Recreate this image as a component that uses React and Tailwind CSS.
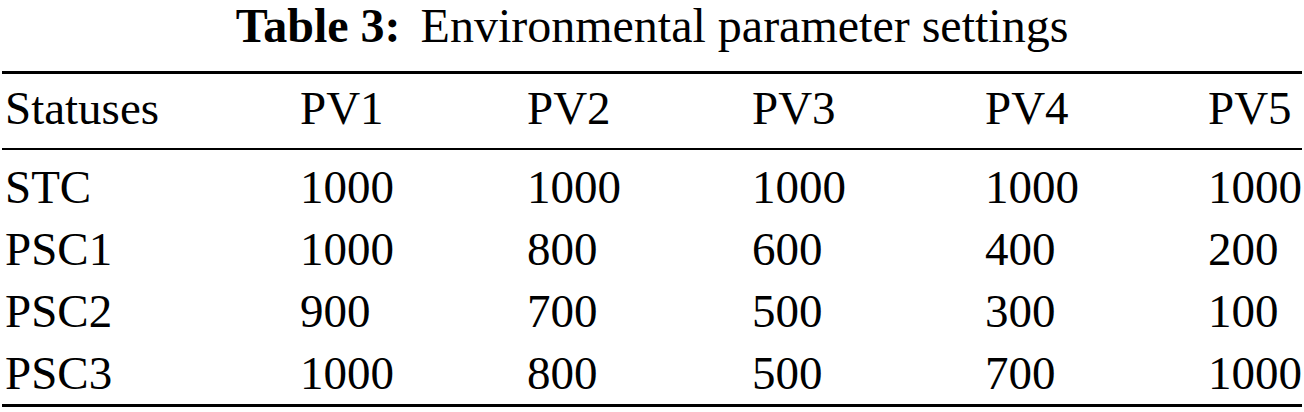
const columns = ['Statuses', 'PV1', 'PV2', 'PV3', 'PV4', 'PV5'];

const rows = [
  ['STC', '1000', '1000', '1000', '1000', '1000'],
  ['PSC1', '1000', '800', '600', '400', '200'],
  ['PSC2', '900', '700', '500', '300', '100'],
  ['PSC3', '1000', '800', '500', '700', '1000'],
];

function Row({ cells, className = '' }) {
  return (
    <div className={`grid grid-cols-[295px_227px_225px_233px_223px_1fr] pl-[3px] ${className}`}>
      {cells.map((c, i) => (
        <span key={i} className="whitespace-nowrap">{c}</span>
      ))}
    </div>
  );
}

export default function App() {
  return (
    <div className="w-[1304px] h-[412px] bg-white text-black font-['Liberation_Serif',serif] text-[47px] overflow-hidden">
      <div className="text-center leading-[52px] text-[48px]">
        <span className="font-bold">Table 3:</span>
        <span className="ml-[20px]">Environmental parameter settings</span>
      </div>

      <div className="mx-[2px] mt-[19px] border-t-[3px] border-black">
        <Row cells={columns} className="leading-[60px] pt-[4px] pb-[10px] border-b-2 border-black" />
        <div className="pt-[6px] border-b-[3px] border-black">
          {rows.map((r) => (
            <Row key={r[0]} cells={r} className="leading-[62px]" />
          ))}
        </div>
      </div>
    </div>
  );
}
